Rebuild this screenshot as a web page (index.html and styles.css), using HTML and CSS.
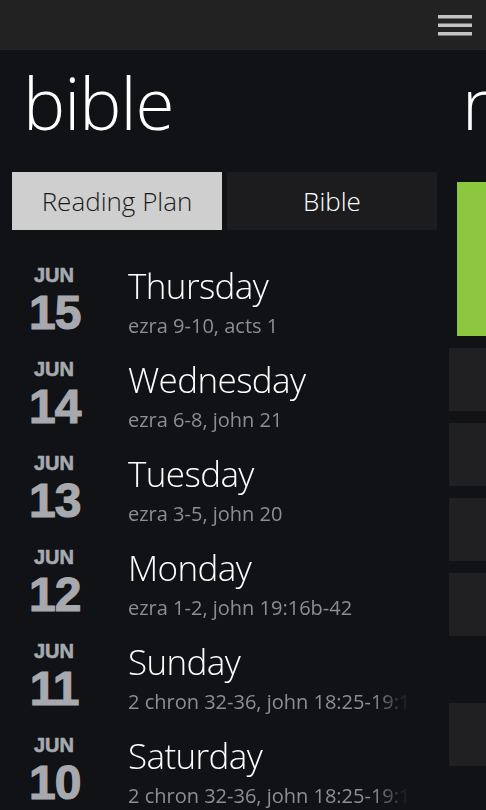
FILE: index.html
```
<!DOCTYPE html>
<html>
  <head>
    <meta charset="UTF-8" />
    <meta name="viewport" content="width=device-width, initial-scale=1.0" />
    <title>bible</title>
    <link rel="stylesheet" href="styles.css">
  </head>
  <body>
    <header class="appbar">
      <button class="menu" aria-label="menu">
        <svg width="34" height="22" viewBox="0 0 34 22">
          <rect x="0" y="0" width="34" height="3.5" fill="#c4c4c4"/>
          <rect x="0" y="8.5" width="34" height="3.5" fill="#c4c4c4"/>
          <rect x="0" y="17" width="34" height="3.5" fill="#c4c4c4"/>
        </svg>
      </button>
    </header>

    <main class="panorama">
      <section class="panel">
        <h1>bible</h1>

        <div class="tabs">
          <div class="tab tab-active">Reading Plan</div>
          <div class="tab">Bible</div>
        </div>

        <ul class="plan">
          <li class="day">
            <div class="date"><span class="month">JUN</span><span class="num">15</span></div>
            <div class="info"><div class="name">Thursday</div><div class="refs">ezra 9-10, acts 1</div></div>
          </li>
          <li class="day">
            <div class="date"><span class="month">JUN</span><span class="num">14</span></div>
            <div class="info"><div class="name">Wednesday</div><div class="refs">ezra 6-8, john 21</div></div>
          </li>
          <li class="day">
            <div class="date"><span class="month">JUN</span><span class="num">13</span></div>
            <div class="info"><div class="name">Tuesday</div><div class="refs">ezra 3-5, john 20</div></div>
          </li>
          <li class="day">
            <div class="date"><span class="month">JUN</span><span class="num">12</span></div>
            <div class="info"><div class="name">Monday</div><div class="refs">ezra 1-2, john 19:16b-42</div></div>
          </li>
          <li class="day">
            <div class="date"><span class="month">JUN</span><span class="num">11</span></div>
            <div class="info"><div class="name">Sunday</div><div class="refs">2 chron 32-36, john 18:25-19:16a</div></div>
          </li>
          <li class="day">
            <div class="date"><span class="month">JUN</span><span class="num">10</span></div>
            <div class="info"><div class="name">Saturday</div><div class="refs">2 chron 32-36, john 18:25-19:16a</div></div>
          </li>
        </ul>
      </section>

      <section class="panel-next">
        <h1>news</h1>
        <div class="hero"></div>
        <div class="tile"></div>
        <div class="tile"></div>
        <div class="tile"></div>
        <div class="tile"></div>
        <div class="tile tile-far"></div>
      </section>
    </main>
  </body>
</html>
```

FILE: styles.css
```
* {
  margin: 0;
  padding: 0;
  box-sizing: border-box;
}

html, body {
  height: 100%;
}

body {
  background: #101216;
  color: #fff;
  font-family: "Open Sans", "Noto Sans", sans-serif;
  overflow: hidden;
}

.appbar {
  height: 50px;
  background: #222222;
  display: flex;
  justify-content: flex-end;
  align-items: flex-start;
}

.menu {
  background: none;
  border: 0;
  margin: 15px 14px 0 0;
  width: 34px;
  height: 22px;
  cursor: pointer;
}

.menu svg {
  display: block;
}

.panorama {
  display: flex;
  width: 100%;
  overflow: hidden;
}

.panel {
  width: 449px;
  flex: none;
}

h1 {
  font-weight: 300;
  font-size: 71px;
  line-height: 1;
  letter-spacing: -1px;
  padding: 17px 0 0 23px;
  height: 122px;
}

.tabs {
  display: flex;
  gap: 5px;
  margin-left: 12px;
  width: 425px;
}

.tab {
  flex: 1;
  height: 58px;
  background: #1c1c1e;
  color: #ffffff;
  font-size: 26px;
  font-weight: 300;
  display: flex;
  align-items: center;
  justify-content: center;
}

.tab-active {
  background: #cfcfcf;
  color: #1b1b1b;
}

.plan {
  list-style: none;
  margin-top: 28px;
}

.day {
  display: flex;
  height: 94px;
}

.date {
  width: 128px;
  flex: none;
  display: flex;
  flex-direction: column;
  align-items: flex-start;
  padding-left: 29px;
  color: #a7a9ae;
  font-family: "Liberation Sans", Arial, sans-serif;
  font-weight: 700;
}

.month {
  display: block;
  font-size: 20px;
  line-height: 21px;
  width: 50px;
  text-align: center;
  margin-top: 7px;
  -webkit-text-stroke: 0.6px #a7a9ae;
}

.num {
  display: block;
  font-size: 48px;
  line-height: 48px;
  letter-spacing: -1px;
  width: 50px;
  text-align: center;
  margin-top: 3px;
  -webkit-text-stroke: 1.2px #a7a9ae;
}

.info {
  width: 282px;
  overflow: hidden;
  white-space: nowrap;
  -webkit-mask-image: linear-gradient(to right, #000 245px, transparent 282px);
  mask-image: linear-gradient(to right, #000 245px, transparent 282px);
}

.name {
  font-size: 35px;
  font-weight: 300;
  letter-spacing: -0.6px;
  line-height: 44px;
  margin-top: 6px;
}

.refs {
  font-size: 20px;
  line-height: 26px;
  color: #8c8e93;
  margin-top: 5px;
}

.panel-next {
  width: 300px;
  flex: none;
}

.panel-next h1 {
  padding-left: 13px;
}

.hero {
  margin: 10px 0 0 8px;
  height: 154px;
  background: #8dc63f;
}

.tile {
  margin-top: 12px;
  height: 63px;
  background: #202022;
}

.tile-far {
  margin-top: 67px;
}
```
